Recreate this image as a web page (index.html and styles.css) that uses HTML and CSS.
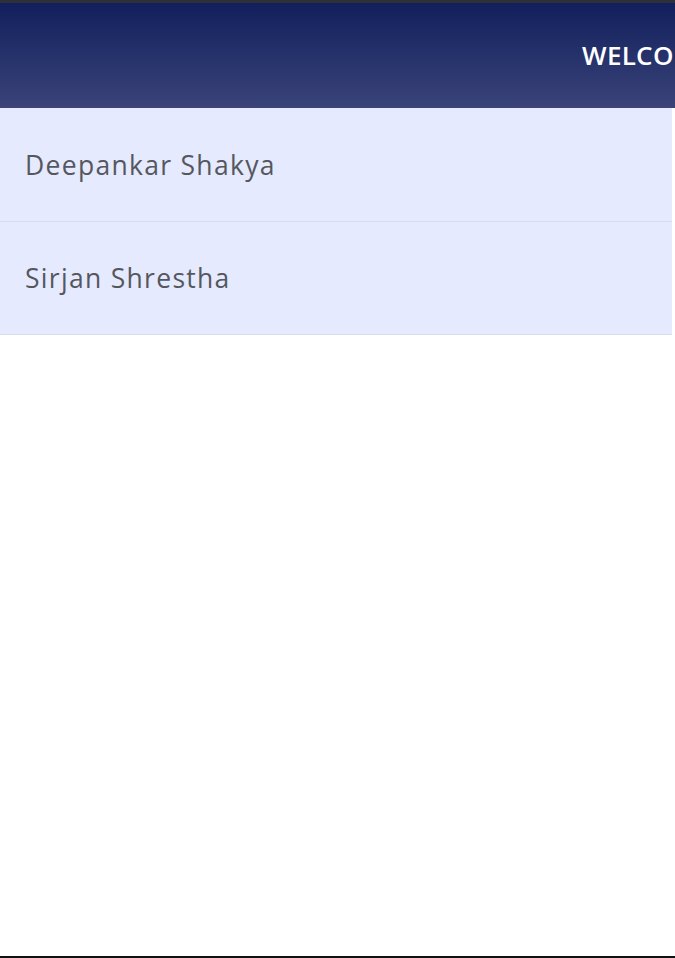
FILE: index.html
```html
<!DOCTYPE html>
<html lang="en">
<head>
<meta charset="utf-8">
<title>Members</title>
<link rel="stylesheet" href="styles.css">
</head>
<body>
<div class="page">
  <div class="topbar"></div>
  <header class="header">
    <span class="welcome">WELCOME</span>
  </header>
  <ul class="list">
    <li class="item">Deepankar Shakya</li>
    <li class="item">Sirjan Shrestha</li>
  </ul>
  <div class="spacer"></div>
  <div class="bottomline"></div>
</div>
</body>
</html>
```
FILE: styles.css
```css
html, body {
  margin: 0;
  padding: 0;
  background: #ffffff;
}
.page {
  width: 675px;
  height: 958px;
  display: flex;
  flex-direction: column;
  overflow: hidden;
  font-family: "Open Sans", "Liberation Sans", sans-serif;
}
.topbar {
  height: 3px;
  background: #2e3037;
  flex: none;
}
.header {
  height: 105px;
  flex: none;
  background: linear-gradient(#121f5c, #3a4479);
  display: flex;
  align-items: center;
  padding-left: 582px;
  overflow: hidden;
  white-space: nowrap;
}
.welcome {
  color: #ffffff;
  font-weight: 600;
  font-size: 26px;
  letter-spacing: 0.3px;
  margin-top: -2px;
}
.list {
  list-style: none;
  margin: 0;
  padding: 0;
  width: 672px;
  flex: none;
}
.item {
  height: 112px;
  display: flex;
  align-items: center;
  padding-left: 25px;
  background: #e5eafe;
  border-bottom: 1px solid #d9dcea;
  color: #55575e;
  font-size: 26.5px;
  letter-spacing: 1.3px;
}
.item:first-child {
  height: 113px;
}
.spacer {
  flex: 1;
}
.bottomline {
  height: 2px;
  background: #111111;
  flex: none;
}
```
